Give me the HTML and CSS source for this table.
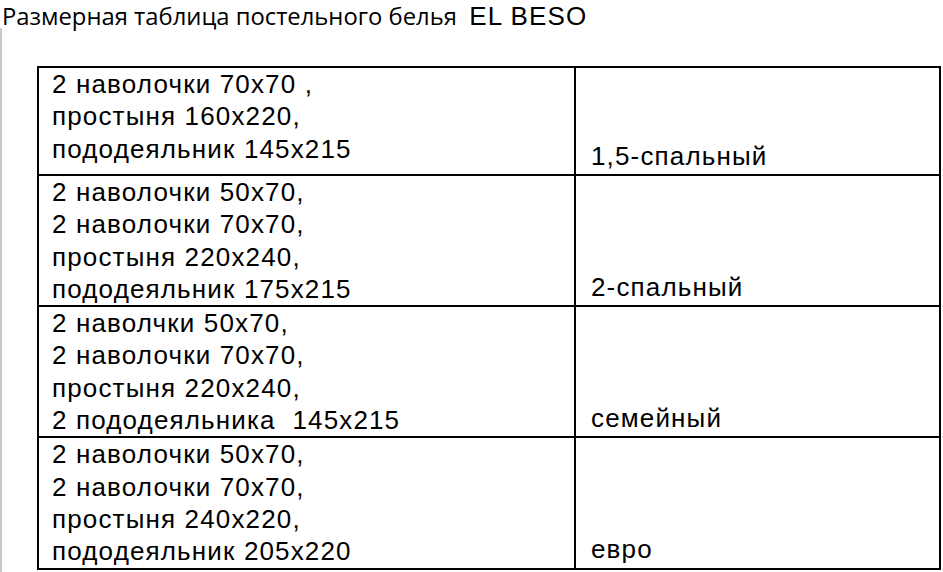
FILE: index.html
```html
<!DOCTYPE html>
<html lang="ru">
<head>
<meta charset="utf-8">
<title>Размерная таблица</title>
<link rel="stylesheet" href="styles.css">
</head>
<body>
<div class="title"><span class="title-main">Размерная таблица постельного белья</span>&nbsp; <span class="title-brand">EL BESO</span></div>
<div class="sheet">
  <table class="sizes">
    <tr class="r1">
      <td class="items">2 наволочки 70x70 ,<br>простыня 160x220,<br>пододеяльник 145x215</td>
      <td class="kind">1,5-спальный</td>
    </tr>
    <tr class="r2">
      <td class="items">2 наволочки 50x70,<br>2 наволочки 70x70,<br>простыня 220x240,<br>пододеяльник 175x215</td>
      <td class="kind">2-спальный</td>
    </tr>
    <tr class="r3">
      <td class="items">2 наволчки 50x70,<br>2 наволочки 70x70,<br>простыня 220x240,<br>2 пододеяльника&nbsp; 145x215</td>
      <td class="kind">семейный</td>
    </tr>
    <tr class="r4">
      <td class="items">2 наволочки 50x70,<br>2 наволочки 70x70,<br>простыня 240x220,<br>пододеяльник 205x220</td>
      <td class="kind">евро</td>
    </tr>
  </table>
</div>
</body>
</html>
```
FILE: styles.css
```css
html, body {
  margin: 0;
  padding: 0;
  background: #fff;
  color: #000;
}
body {
  width: 943px;
  height: 572px;
  overflow: hidden;
}
.title {
  height: 28px;
  padding-left: 2px;
  font-family: "Open Sans", sans-serif;
  font-size: 23.8px;
  line-height: 32px;
  white-space: nowrap;
}
.title-brand {
  font-family: "Liberation Sans", Arial, sans-serif;
  font-size: 26px;
  letter-spacing: 1.1px;
}
.sheet {
  border-left: 2px solid #c8c8c8;
  padding: 38px 0 0 35px;
  height: 506px;
}
.sizes {
  border-collapse: collapse;
  width: 904px;
  font-family: "Liberation Sans", Arial, sans-serif;
  font-size: 26px;
  line-height: 32.3px;
  letter-spacing: 1.15px;
}
.sizes td {
  border: 2px solid #000;
  padding: 0;
}
.items {
  width: 522px;
  padding: 0 0 0 13px !important;
  vertical-align: top;
}
.kind {
  vertical-align: bottom;
  padding: 0 0 2px 15px !important;
}
.r1 { height: 108px; }
.r2 { height: 130px; }
.r3 { height: 129px; }
.r4 { height: 129px; }
```
